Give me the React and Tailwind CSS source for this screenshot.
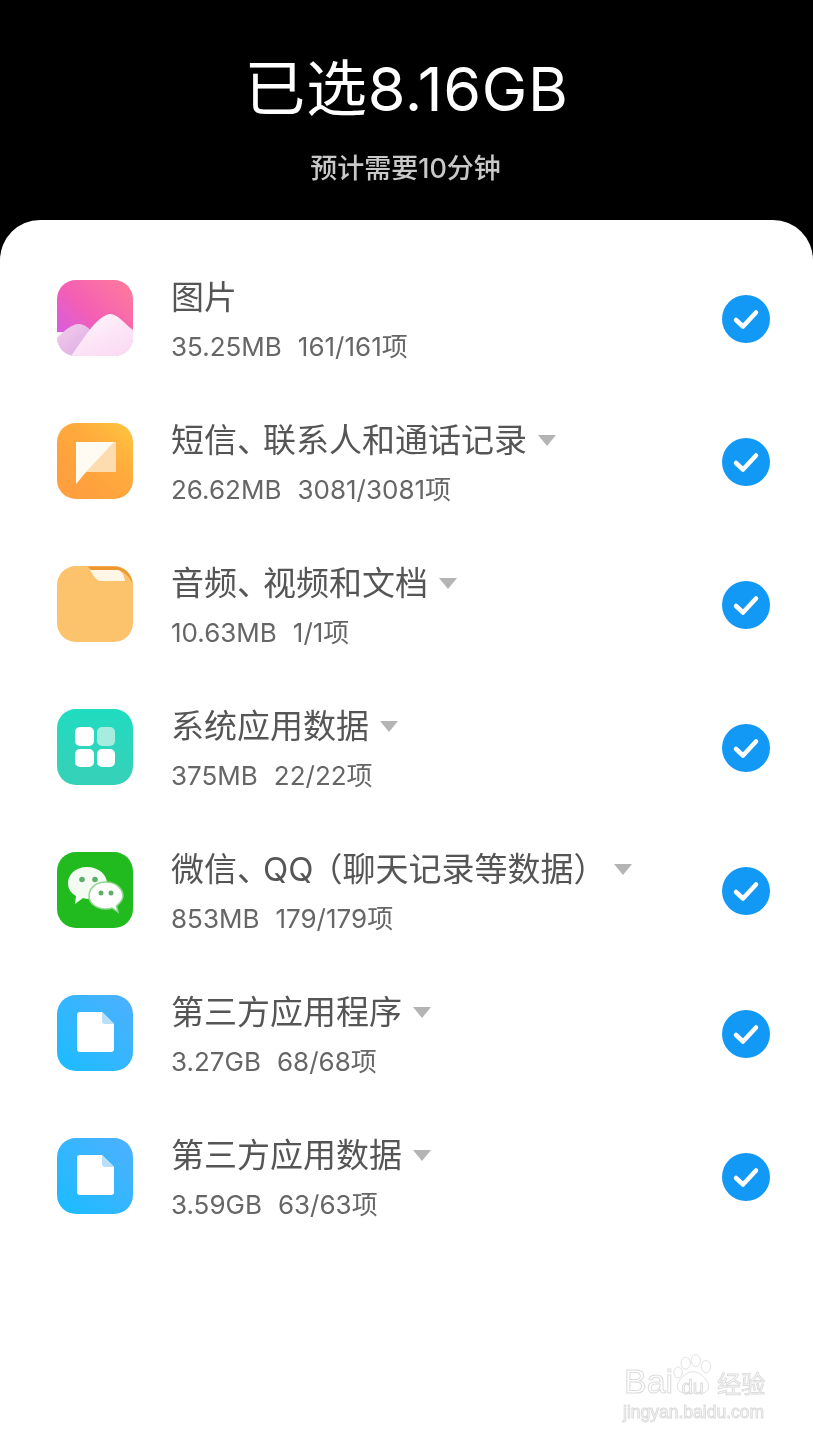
import React from "react";

const rows = [
  { icon: "photo", title: "图片", info: "35.25MB", count: "161/161项" },
  { icon: "sms", title: "短信、联系人和通话记录", info: "26.62MB", count: "3081/3081项", arrow: true },
  { icon: "folder", title: "音频、视频和文档", info: "10.63MB", count: "1/1项", arrow: true },
  { icon: "apps", title: "系统应用数据", info: "375MB", count: "22/22项", arrow: true },
  { icon: "wechat", title: "微信、QQ（聊天记录等数据）", info: "853MB", count: "179/179项", arrow: true },
  { icon: "file", title: "第三方应用程序", info: "3.27GB", count: "68/68项", arrow: true },
  { icon: "file", title: "第三方应用数据", info: "3.59GB", count: "63/63项", arrow: true },
];

const PhotoIcon = () => (
  <svg viewBox="0 0 76 76" className="w-full h-full">
    <defs>
      <linearGradient id="photoBg" x1="0" y1="1" x2="1" y2="0">
        <stop offset="0" stopColor="#c85cf0" />
        <stop offset="0.5" stopColor="#f45fb4" />
        <stop offset="1" stopColor="#ff7d9a" />
      </linearGradient>
      <linearGradient id="photoHill" x1="0" y1="0" x2="0.6" y2="1">
        <stop offset="0" stopColor="#fff6fb" />
        <stop offset="1" stopColor="#fbdcf4" />
      </linearGradient>
      <linearGradient id="photoBack" x1="0" y1="0" x2="1" y2="1">
        <stop offset="0" stopColor="#f3cdea" />
        <stop offset="1" stopColor="#d9a6e6" />
      </linearGradient>
      <clipPath id="photoClip">
        <rect width="76" height="76" rx="19" />
      </clipPath>
    </defs>
    <g clipPath="url(#photoClip)">
      <rect width="76" height="76" fill="url(#photoBg)" />
      <rect y="52" width="76" height="24" fill="#fdeef9" />
      <path d="M0 58 C8 50 16 43 23 44 C30 45 36 52 44 62 L30 76 L0 76Z" fill="url(#photoBack)" />
      <path d="M14 76 C26 60 38 38 52 34 C60 33 68 44 76 50 L76 76Z" fill="url(#photoHill)" />
    </g>
  </svg>
);

const SmsIcon = () => (
  <svg viewBox="0 0 76 76" className="w-full h-full">
    <defs>
      <linearGradient id="smsBg" x1="1" y1="0" x2="0.2" y2="0.8">
        <stop offset="0" stopColor="#fdc63f" />
        <stop offset="0.5" stopColor="#ffaa3c" />
        <stop offset="1" stopColor="#ff9f3e" />
      </linearGradient>
    </defs>
    <rect width="76" height="76" rx="19" fill="url(#smsBg)" />
    <path d="M19 19 H59 V49 H29 L19 61Z" fill="#fddcb0" />
    <path d="M19 19 H57 L28 50 L19 61Z" fill="#fffaf2" />
  </svg>
);

const FolderIcon = () => (
  <svg viewBox="0 0 76 76" className="w-full h-full">
    <rect width="76" height="76" rx="19" fill="#fdc26c" />
    <path d="M30 0.500 H57 C67 0.500 75 8 75.500 18 C72 10 67 5 60 4 H34 C33 3 32 1.500 30 0.500Z" fill="#ee9630" />
    <path d="M33 4 H60 C64 4 67 8 68 15 H44 C39 15 36 9 33 4Z" fill="#fff6e6" />
  </svg>
);

const AppsIcon = () => (
  <div className="w-full h-full rounded-[19px] bg-gradient-to-b from-[#1fdcc0] to-[#36d0b8] grid grid-cols-2 gap-[3px] p-[18px]">
    <div className="bg-white rounded-[5px]" />
    <div className="bg-[#a6ecdf] rounded-[5px]" />
    <div className="bg-white rounded-[5px]" />
    <div className="bg-white rounded-[5px]" />
  </div>
);

const WechatIcon = () => (
  <svg viewBox="0 0 76 76" className="w-full h-full">
    <rect width="76" height="76" rx="19" fill="#22bb1f" />
    <path d="M30 15 C18 15 11 23 11 31 C11 37 14 41 19 44 L18 52 L26 46 C28 46.500 30 47 32 47 C44 47 50 39 50 31 C50 23 42 15 30 15Z" fill="#f4fbf3" />
    <circle cx="25" cy="27.500" r="2.800" fill="#5cae6a" />
    <circle cx="38" cy="27.500" r="2.800" fill="#5cae6a" />
    <path d="M49 30 C38 30 32 37 32 44 C32 52 40 57 49 57 C51 57 53 57 55 56 L61 60 L59.500 54 C63 51 66 48 66 44 C66 37 59 30 49 30Z" fill="#fff" stroke="#8fd68c" strokeWidth="1.500" />
    <circle cx="44" cy="41" r="2.500" fill="#5cae6a" />
    <circle cx="54" cy="41" r="2.500" fill="#5cae6a" />
  </svg>
);

const FileIcon = () => (
  <svg viewBox="0 0 76 76" className="w-full h-full">
    <defs>
      <linearGradient id="fileBg" x1="1" y1="0" x2="0" y2="1">
        <stop offset="0" stopColor="#4fb0ff" />
        <stop offset="1" stopColor="#1abcff" />
      </linearGradient>
    </defs>
    <rect width="76" height="76" rx="19" fill="url(#fileBg)" />
    <path d="M20 20 C20 18 21 17 23 17 H45 L57 29 V54 C57 56 56 57 54 57 H23 C21 57 20 56 20 54Z" fill="#fff" />
    <path d="M45 17 L57 29 H48 C46 29 45 28 45 26Z" fill="#b8e0fb" />
  </svg>
);

const icons = {
  photo: PhotoIcon,
  sms: SmsIcon,
  folder: FolderIcon,
  apps: AppsIcon,
  wechat: WechatIcon,
  file: FileIcon,
};

const Check = () => (
  <svg viewBox="0 0 48 48" className="w-[48px] h-[48px] shrink-0">
    <circle cx="24" cy="24" r="24" fill="#1298f5" />
    <path d="M14 25 L21 31.500 L34 17.500" fill="none" stroke="#fff" strokeWidth="4.500" strokeLinecap="round" strokeLinejoin="round" />
  </svg>
);

// punctuation is narrower in the reference font, tighten it with letter spacing
const Title = ({ text }) => (
  <span className="text-[33px] leading-[44px] text-[#555] whitespace-nowrap">
    {text.split(/(、|）|QQ)/).map((part, i) => {
      if (part === "、") return <span key={i} className="tracking-[-7px]">{part}</span>;
      if (part === "）") return <span key={i} className="tracking-[-3px]">{part}</span>;
      if (part === "QQ") return <span key={i}>Q<span className="tracking-[-4px]">Q</span></span>;
      return part;
    })}
  </span>
);

const Row = ({ row }) => {
  const Icon = icons[row.icon];
  return (
    <div className="h-[143px] flex items-start pl-[57px] pr-[43px]">
      <div className="w-[76px] h-[76px] shrink-0">
        <Icon />
      </div>
      <div className="ml-[38px] flex-1 -mt-[5px]">
        <div className="flex items-center h-[44px]">
          <Title text={row.title} />
          {row.arrow && (
            <span className="ml-[11px] w-0 h-0 border-x-[9px] border-x-transparent border-t-[11px] border-t-[#b4b4b4]" />
          )}
        </div>
        <div className="mt-[11px] flex text-[26px] leading-[34px] text-[#666]">
          <span>{row.info}</span>
          <span className="ml-[16px]">{row.count}</span>
        </div>
      </div>
      <div className="mt-[15px]">
        <Check />
      </div>
    </div>
  );
};

const Watermark = () => (
  <div className="absolute left-[624px] top-[1352px] w-[150px] h-[72px] text-white [-webkit-text-stroke:1px_#dcdcdc] font-['Liberation_Sans',sans-serif]">
    <div className="flex items-end h-[46px]">
      <span className="text-[34px] leading-[34px]">Bai</span>
      <span className="relative w-[44px] h-[46px] flex items-end justify-center">
        <svg viewBox="0 0 52 48" className="absolute inset-0 w-full h-full" fill="none" stroke="#dcdcdc" strokeWidth="1">
          <ellipse cx="15" cy="10" rx="5.500" ry="7" />
          <ellipse cx="27" cy="7" rx="5.500" ry="7" />
          <ellipse cx="39" cy="14" rx="5.500" ry="7" />
          <ellipse cx="6" cy="21" rx="5" ry="6.500" />
          <path d="M24 20 C32 20 42 30 42 38 C42 46 30 47 24 45 C18 47 5 46 5 38 C5 30 16 20 24 20Z" />
        </svg>
        <span className="relative text-[20px] leading-[22px] mr-[5px]">du</span>
      </span>
      <span className="text-[24px] leading-[30px] font-['Noto_Sans_CJK_SC',sans-serif]">经验</span>
    </div>
    <div className="text-[17.5px] leading-[22px] mt-[3px] -ml-[1px] whitespace-nowrap">jingyan.baidu.com</div>
  </div>
);

export default function App() {
  return (
    <div className="relative w-[813px] h-[1440px] overflow-hidden bg-black blur-[0.5px] font-['Inter','Noto_Sans_CJK_SC','Noto_Sans',sans-serif]">
      <header className="h-[220px] flex flex-col items-center text-white">
        <h1 className="mt-[51px] text-[61px] leading-[76px] tracking-[0.7px] font-normal whitespace-nowrap">已选8.16GB</h1>
        <p className="mt-[25px] text-[27px] leading-[34px] font-medium text-[#c8c8c8] -translate-x-[1px]">预计需要10分钟</p>
      </header>
      <main className="h-[1220px] bg-white rounded-t-[40px] pt-[60px]">
        {rows.map((row) => (
          <Row key={row.title} row={row} />
        ))}
      </main>
      <Watermark />
    </div>
  );
}
